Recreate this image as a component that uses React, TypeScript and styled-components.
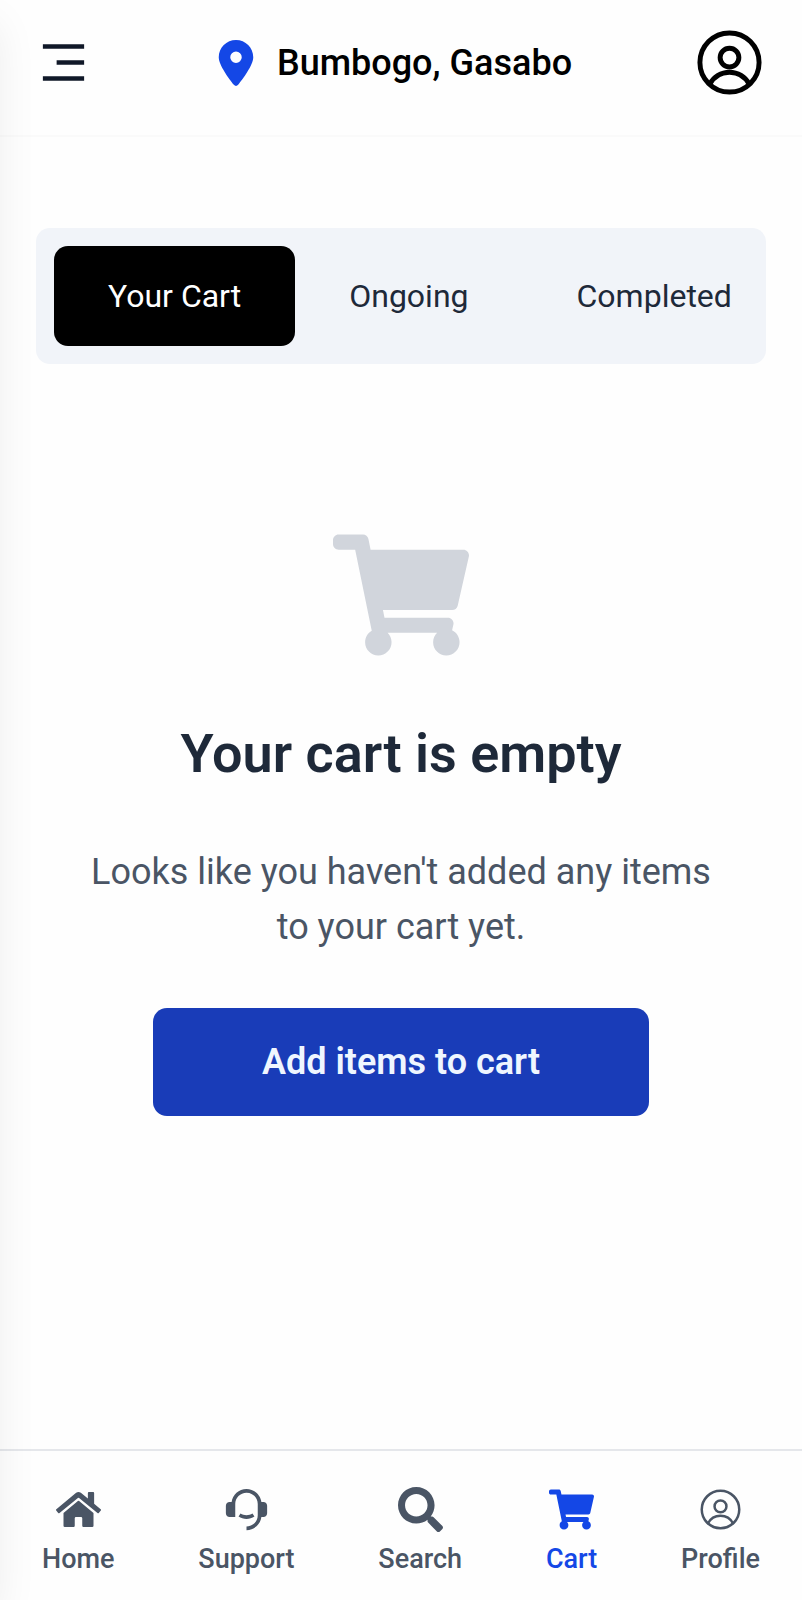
import React, { useState } from 'react';
import styled, { createGlobalStyle } from 'styled-components';
import { FaHome, FaSearch, FaShoppingCart } from 'react-icons/fa';
import { FaLocationDot } from 'react-icons/fa6';
import { RiCustomerService2Fill, RiMenu3Fill } from 'react-icons/ri';

const GlobalStyle = createGlobalStyle`
  *, *::before, *::after { box-sizing: border-box; }
  body {
    margin: 0;
    background: #fefefe;
    font-family: Roboto, "Liberation Sans", sans-serif;
    color: #1e2939;
  }
  button { font: inherit; border: 0; cursor: pointer; }
`;

const Page = styled.div`
  display: flex;
  flex-direction: column;
  min-height: 100vh;
`;

const DrawerEdge = styled.div`
  position: fixed;
  top: 0;
  bottom: 0;
  right: 100%;
  width: 320px;
  box-shadow: 0 20px 40px -4px rgba(0, 0, 0, 0.08);
  pointer-events: none;
`;

const Header = styled.header`
  display: flex;
  align-items: center;
  justify-content: space-between;
  padding: 27px 37px 37px 36px;
  border-bottom: 2px solid #fafafa;
`;

const IconButton = styled.button<{ $size: number; $color: string }>`
  display: flex;
  padding: 0;
  background: none;
  font-size: ${(p) => p.$size}px;
  color: ${(p) => p.$color};
`;

const Location = styled.button`
  display: flex;
  align-items: center;
  gap: 18px;
  padding: 0;
  background: none;
  color: #000;
  font-size: 36px;
  font-weight: 500;
  line-height: 54px;
`;

const Pin = styled(FaLocationDot)`
  color: #1447e6;
  font-size: 46px;
`;

const Main = styled.main`
  flex: 1;
  padding: 91px 36px 36px;
`;

const TabList = styled.div`
  display: flex;
  padding: 18px;
  border-radius: 14px;
  background: #f1f4f9;
`;

const Tab = styled.button<{ $active: boolean }>`
  flex: none;
  padding: 27px 54px;
  border-radius: 14px;
  background: ${(p) => (p.$active ? '#000' : 'transparent')};
  color: ${(p) => (p.$active ? '#fff' : '#1e2939')};
  font-size: 32px;
  line-height: 46px;
`;

const Empty = styled.section`
  display: flex;
  flex-direction: column;
  align-items: center;
  padding: 163px 36px 0;
  text-align: center;
`;

const EmptyIcon = styled(FaShoppingCart)`
  color: #d1d5dc;
  font-size: 136px;
`;

const EmptyTitle = styled.h1`
  margin: 55px 0 0;
  font-size: 54px;
  font-weight: 600;
  line-height: 72px;
`;

const EmptyText = styled.p`
  max-width: 660px;
  margin: 55px 0 53px;
  color: #4a5565;
  font-size: 36px;
  line-height: 55px;
`;

const PrimaryButton = styled.button`
  padding: 27px 109px;
  border-radius: 14px;
  background: #193cb8;
  color: #eff6ff;
  font-size: 36px;
  font-weight: 600;
  line-height: 54px;
`;

const BottomNav = styled.nav`
  display: flex;
  justify-content: space-between;
  padding: 36px 42px 23px;
  border-top: 2px solid #e5e7eb;
`;

const NavLink = styled.a<{ $active?: boolean }>`
  display: flex;
  flex-direction: column;
  align-items: center;
  gap: 9px;
  color: ${(p) => (p.$active ? '#1447e6' : '#4a5565')};
  font-size: 27px;
  font-weight: 500;
  line-height: 36px;
  text-decoration: none;

  svg { font-size: 45px; }
`;

function ProfileIcon({ stroke }: { stroke: number }) {
  return (
    <svg width="1em" height="1em" viewBox="0 0 72 72" fill="none" stroke="currentColor" strokeWidth={stroke} aria-hidden="true">
      <circle cx="36" cy="36" r="30" />
      <circle cx="36" cy="31" r="9.500" />
      <path d="M16 58A22.500 22.500 0 0 1 56 58" />
    </svg>
  );
}

const tabs = ['Your Cart', 'Ongoing', 'Completed'];

const links = [
  { label: 'Home', icon: <FaHome /> },
  { label: 'Support', icon: <RiCustomerService2Fill /> },
  { label: 'Search', icon: <FaSearch /> },
  { label: 'Cart', icon: <FaShoppingCart />, active: true },
  { label: 'Profile', icon: <ProfileIcon stroke={4} /> },
];

export default function App() {
  const [current, setCurrent] = useState(tabs[0]);

  return (
    <Page>
      <GlobalStyle />
      <Header>
        <IconButton type="button" aria-label="Open menu" $size={55} $color="#101828">
          <RiMenu3Fill />
        </IconButton>
        <Location type="button">
          <Pin />
          Bumbogo, Gasabo
        </Location>
        <IconButton type="button" aria-label="Account" $size={71} $color="#000">
          <ProfileIcon stroke={5} />
        </IconButton>
      </Header>
      <Main>
        <TabList role="tablist">
          {tabs.map((tab) => (
            <Tab key={tab} type="button" role="tab" aria-selected={tab === current} $active={tab === current} onClick={() => setCurrent(tab)}>
              {tab}
            </Tab>
          ))}
        </TabList>
        <Empty>
          <EmptyIcon />
          <EmptyTitle>Your cart is empty</EmptyTitle>
          <EmptyText>Looks like you haven't added any items to your cart yet.</EmptyText>
          <PrimaryButton type="button">Add items to cart</PrimaryButton>
        </Empty>
      </Main>
      <BottomNav aria-label="Main">
        {links.map((link) => (
          <NavLink key={link.label} href={`#${link.label.toLowerCase()}`} $active={link.active} aria-current={link.active ? 'page' : undefined}>
            {link.icon}
            {link.label}
          </NavLink>
        ))}
      </BottomNav>
      <DrawerEdge />
    </Page>
  );
}
